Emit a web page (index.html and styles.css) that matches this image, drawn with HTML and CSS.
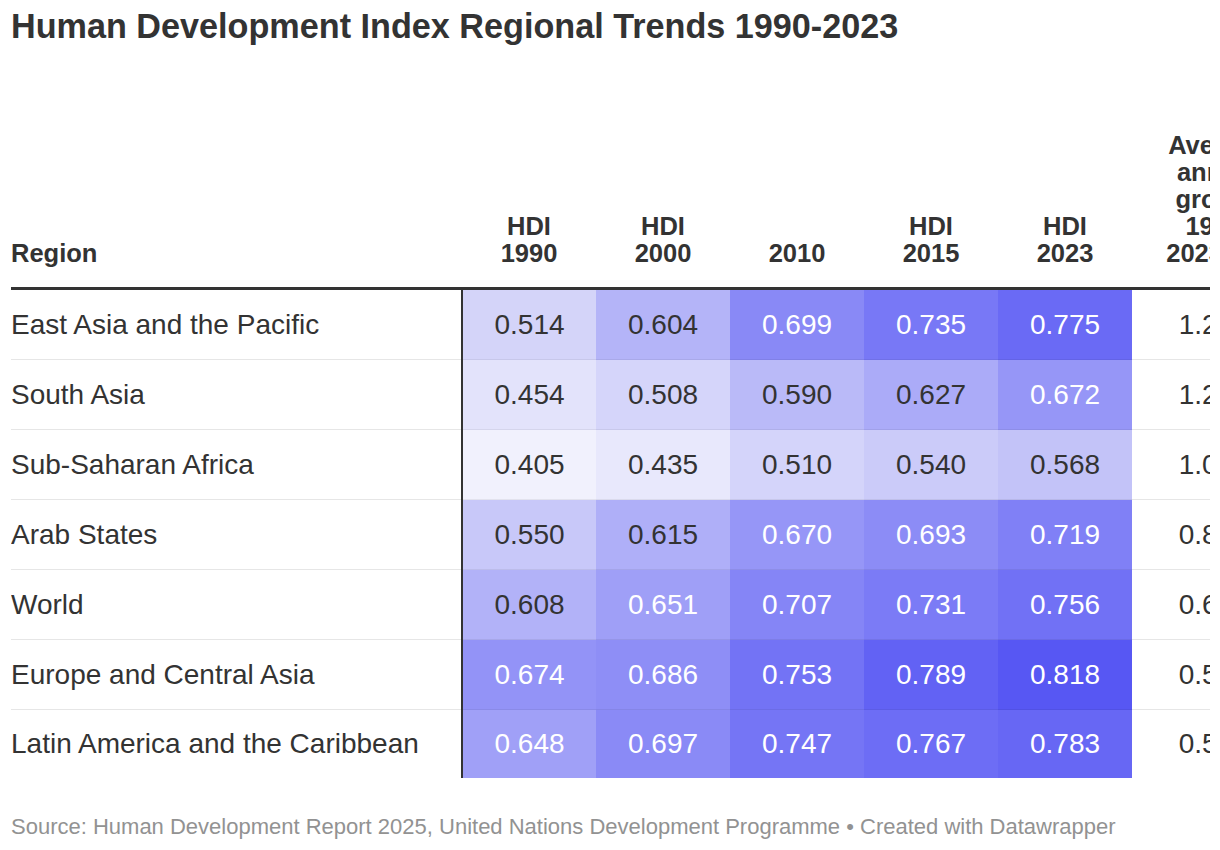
FILE: index.html
```html
<!DOCTYPE html>
<html lang="en">
<head>
<meta charset="utf-8">
<title>Human Development Index Regional Trends 1990-2023</title>
<link rel="stylesheet" href="styles.css">
</head>
<body>
<div class="chart">
  <h1 class="title">Human Development Index Regional Trends 1990-2023</h1>
  <div class="table-wrap">
    <table class="hdi">
      <thead>
        <tr>
          <th class="col-region">Region</th>
          <th class="col-num">HDI<br>1990</th>
          <th class="col-num">HDI<br>2000</th>
          <th class="col-num">2010</th>
          <th class="col-num">HDI<br>2015</th>
          <th class="col-num">HDI<br>2023</th>
          <th class="col-growth">Average annual growth 1990-2023 (%)</th>
        </tr>
      </thead>
      <tbody>
        <tr>
          <td class="region">East Asia and the Pacific</td>
          <td class="num" style="background:#d4d4f9">0.514</td>
          <td class="num" style="background:#b4b4f8">0.604</td>
          <td class="num light" style="background:#8989f6">0.699</td>
          <td class="num light" style="background:#7878f6">0.735</td>
          <td class="num light" style="background:#6a6af5">0.775</td>
          <td class="growth">1.25</td>
        </tr>
        <tr>
          <td class="region">South Asia</td>
          <td class="num" style="background:#e3e3fb">0.454</td>
          <td class="num" style="background:#d5d5fa">0.508</td>
          <td class="num" style="background:#babaf8">0.590</td>
          <td class="num" style="background:#ababf8">0.627</td>
          <td class="num light" style="background:#9696f7">0.672</td>
          <td class="growth">1.20</td>
        </tr>
        <tr>
          <td class="region">Sub-Saharan Africa</td>
          <td class="num" style="background:#f1f1fd">0.405</td>
          <td class="num" style="background:#e8e8fc">0.435</td>
          <td class="num" style="background:#d4d4fa">0.510</td>
          <td class="num" style="background:#cbcbf9">0.540</td>
          <td class="num" style="background:#c3c3f8">0.568</td>
          <td class="growth">1.03</td>
        </tr>
        <tr>
          <td class="region">Arab States</td>
          <td class="num" style="background:#c8c8f9">0.550</td>
          <td class="num" style="background:#afaff8">0.615</td>
          <td class="num light" style="background:#9696f7">0.670</td>
          <td class="num light" style="background:#8c8cf6">0.693</td>
          <td class="num light" style="background:#8080f6">0.719</td>
          <td class="growth">0.81</td>
        </tr>
        <tr>
          <td class="region">World</td>
          <td class="num" style="background:#b2b2f8">0.608</td>
          <td class="num light" style="background:#9f9ff7">0.651</td>
          <td class="num light" style="background:#8585f6">0.707</td>
          <td class="num light" style="background:#7b7bf6">0.731</td>
          <td class="num light" style="background:#7171f5">0.756</td>
          <td class="growth">0.66</td>
        </tr>
        <tr>
          <td class="region">Europe and Central Asia</td>
          <td class="num light" style="background:#9393f7">0.674</td>
          <td class="num light" style="background:#8e8ef6">0.686</td>
          <td class="num light" style="background:#7373f5">0.753</td>
          <td class="num light" style="background:#6262f4">0.789</td>
          <td class="num light" style="background:#5757f3">0.818</td>
          <td class="growth">0.59</td>
        </tr>
        <tr>
          <td class="region">Latin America and the Caribbean</td>
          <td class="num light" style="background:#a0a0f7">0.648</td>
          <td class="num light" style="background:#8a8af6">0.697</td>
          <td class="num light" style="background:#7575f5">0.747</td>
          <td class="num light" style="background:#6d6df5">0.767</td>
          <td class="num light" style="background:#6767f4">0.783</td>
          <td class="growth">0.58</td>
        </tr>
      </tbody>
    </table>
  </div>
  <p class="footer">Source: Human Development Report 2025, United Nations Development Programme • Created with Datawrapper</p>
</div>
</body>
</html>
```
FILE: styles.css
```css
html, body {
  margin: 0;
  padding: 0;
  background: #ffffff;
}

body {
  font-family: "Liberation Sans", Arial, Helvetica, sans-serif;
  color: #333333;
  overflow: hidden;
}

.chart {
  padding: 0 10px 0 11px;
  width: 1199px;
}

.title {
  margin: 0;
  padding-top: 6px;
  font-size: 34.2px;
  line-height: 40px;
  font-weight: 700;
  color: #333333;
}

.table-wrap {
  margin-top: 86px;
  width: 1199px;
  overflow: hidden;
}

.hdi {
  border-collapse: collapse;
  table-layout: fixed;
  width: 1297px;
}

.hdi th {
  font-size: 25.5px;
  line-height: 27px;
  font-weight: 700;
  color: #333333;
  vertical-align: bottom;
  padding: 0 0 20px 0;
  border-bottom: 3px solid #333333;
}

.col-region {
  width: 451px;
  text-align: left;
}

.col-num {
  width: 134px;
  text-align: center;
}

.col-growth {
  width: 176px;
  text-align: center;
  box-sizing: border-box;
}

.hdi th.col-growth {
  padding: 0 34px 20px 30px;
}

.hdi td {
  height: 69px;
  padding: 0;
  font-size: 28px;
  line-height: 32px;
  vertical-align: middle;
  border-bottom: 1px solid #e6e6e6;
  color: #333333;
}

.hdi tbody tr:last-child td {
  border-bottom: none;
  height: 68px;
}

.hdi td.region {
  text-align: left;
  border-right: 2px solid #333333;
}

.hdi td.num {
  text-align: center;
  border-bottom-color: rgba(0, 0, 0, 0.06);
}

.hdi td.num.light {
  color: #ffffff;
}

.hdi td.growth {
  text-align: center;
  padding: 0 46px 0 18px;
}

.footer {
  margin: 36px 0 0 0;
  font-size: 22px;
  line-height: 26px;
  color: #929292;
}
```
